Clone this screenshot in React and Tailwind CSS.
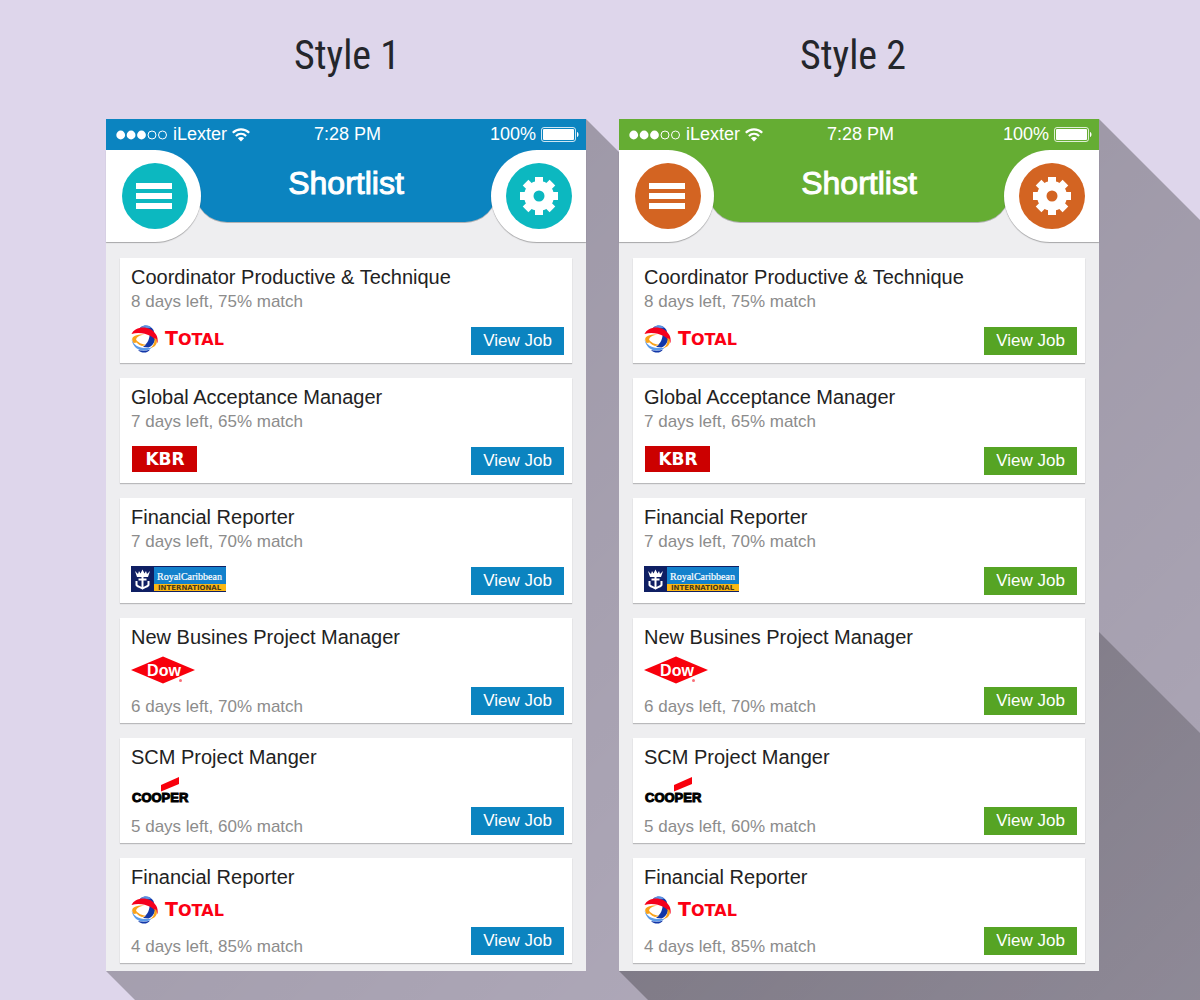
import React, { useId } from 'react';

const jobs = [
  { title: 'Coordinator Productive & Technique', days: 8, match: 75, logo: 'total', logoLast: true },
  { title: 'Global Acceptance Manager', days: 7, match: 65, logo: 'kbr', logoLast: true },
  { title: 'Financial Reporter', days: 7, match: 70, logo: 'royal', logoLast: true },
  { title: 'New Busines Project Manager', days: 6, match: 70, logo: 'dow' },
  { title: 'SCM Project Manger', days: 5, match: 60, logo: 'cooper' },
  { title: 'Financial Reporter', days: 4, match: 85, logo: 'total' },
];

const themes = {
  blue: {
    bar: 'bg-[#0b84c0]',
    half: 'bg-[linear-gradient(#0b84c0_50%,transparent_50%)]',
    round: 'bg-[#0cb8c0]',
    hole: 'fill-[#0cb8c0]',
    button: 'bg-[#0b84c0] hover:bg-[#0a76ad]',
  },
  green: {
    bar: 'bg-[#65ad33]',
    half: 'bg-[linear-gradient(#65ad33_50%,transparent_50%)]',
    round: 'bg-[#d36422]',
    hole: 'fill-[#d36422]',
    button: 'bg-[#56a424] hover:bg-[#4a9120]',
  },
};

const TotalLogo = () => (
  <svg width="100" height="28" viewBox="0 0 100 28" role="img" aria-label="Total">
    <path d="M9 2.500C13-0.500 20 0 22.500 5L24 12L16 6Z" fill="#1237a8" />
    <path d="M13 0.500C17 0 19 1 20 3L13 3.500L9 2.500Z" fill="#5b8fe0" />
    <path d="M18.500 8L24.500 11C24.500 16 22 21 17.500 22.500L12 22C17 18 19 13 18.500 8Z" fill="#1237a8" />
    <path d="M0.500 9C3 3 12 0.500 19 4C25 7.500 27.500 12 26.500 18C23 11 12 6 0.500 9Z" fill="#f5001d" />
    <path d="M2.500 18C-1.500 12 4 9 14 9.500C6.500 10.500 3.500 13.500 6 17.500Z" fill="#f9a21a" />
    <path d="M4 14C7 17.500 11 19.500 15.500 20L11 21C7.500 20 5 17.500 4 14Z" fill="#f9a21a" />
    <path d="M25.500 14C27 19 24 22 19 23.500C22 21 24 18 23.500 13Z" fill="#f9a21a" />
    <path d="M0.500 14C2 21 11 24.500 21 22.500C16 27.500 2.500 27.500 0.500 14Z" fill="#5b9bea" />
    <path d="M7 25C11 26 15 26 19 24.500C17 28 11 29 7 25Z" fill="#1237a8" />
    <text x="34" y="20" fill="#fb0014" className="font-['DejaVu_Sans'] font-bold">
      <tspan fontSize="19">T</tspan>
      <tspan fontSize="16">OTAL</tspan>
    </text>
  </svg>
);

const KbrLogo = () => (
  <svg width="68" height="26" viewBox="0 0 68 26" role="img" aria-label="KBR">
    <rect x="1" y="0" width="65" height="26" fill="#cc0000" />
    <text x="34" y="19" textAnchor="middle" fontSize="17" fill="#fff" className="font-['DejaVu_Sans'] font-bold">
      KBR
    </text>
  </svg>
);

const RoyalLogo = () => (
  <svg width="96" height="26" viewBox="0 0 96 26" role="img" aria-label="Royal Caribbean International">
    <rect width="95" height="26" fill="#0f1f63" />
    <rect x="23" y="1" width="72" height="17" fill="#1381cc" />
    <rect x="23" y="18" width="72" height="7" fill="#fcb813" />
    <g fill="none" stroke="#fff" strokeWidth="2">
      <path d="M11.500 9V22" />
      <path d="M5.500 15V19C6.500 21 9.500 21 11.500 22.500C13.500 21 16.500 21 17.500 19V15" />
      <path d="M7.500 13.500H15.500" />
    </g>
    <path d="M4 5L7 8L8 5L9.500 7.500L11.500 3.500L13.500 7.500L15 5L16 8L19 5L17 11H6Z" fill="#fff" />
    <text x="26" y="14" fontSize="10" fill="#fff" stroke="#fff" strokeWidth="0.200" className="font-['Liberation_Serif']">
      RoyalCaribbean
    </text>
    <text x="27" y="24" fontSize="7" fill="#4a3a1a" className="font-['DejaVu_Sans'] font-bold">
      INTERNATIONAL
    </text>
  </svg>
);

const DowLogo = () => (
  <svg width="66" height="28" viewBox="0 0 66 28" role="img" aria-label="Dow">
    <path d="M0 14L32 0.500L64 14L32 27.500Z" fill="#f8000c" />
    <text x="33" y="20" textAnchor="middle" fontSize="16" fill="#fff" className="font-['Liberation_Sans'] font-bold">
      Dow
    </text>
    <circle cx="49.500" cy="24.500" r="1.500" fill="#f87078" />
  </svg>
);

const CooperLogo = () => (
  <svg width="60" height="28" viewBox="0 0 60 28" role="img" aria-label="Cooper">
    <path d="M30 9L48 1V8L30 15.500Z" fill="#f8000c" />
    <text
      x="1"
      y="26"
      fontSize="13"
      stroke="#000"
      strokeWidth="1"
      className="font-['Liberation_Sans'] font-bold"
    >
      COOPER
    </text>
  </svg>
);

const logos = {
  total: TotalLogo,
  kbr: KbrLogo,
  royal: RoyalLogo,
  dow: DowLogo,
  cooper: CooperLogo,
};

const MenuIcon = () => (
  <svg width="38" height="26" viewBox="0 0 38 26" fill="#fff" aria-hidden="true">
    <rect width="36" height="6" />
    <rect y="10" width="36" height="6" />
    <rect y="20" width="36" height="6" />
  </svg>
);

const GearIcon = ({ hole }) => (
  <svg width="38" height="38" viewBox="-19 -19 38 38" fill="#fff" aria-hidden="true">
    <circle r="15" />
    {[0, 45, 90, 135].map((angle) => (
      <rect key={angle} x="-4" y="-19" width="8" height="38" transform={`rotate(${angle})`} />
    ))}
    <circle r="5.500" className={hole} />
  </svg>
);

const StatusBar = () => (
  <div className="grid h-[31px] grid-cols-3 items-center pl-[10px] pr-[7px] text-[18px] text-white">
    <div className="flex items-center gap-[5px]">
      <svg width="52" height="10" viewBox="0 0 52 10" fill="#fff" aria-hidden="true">
        <circle cx="4.700" cy="5" r="4.400" />
        <circle cx="15.100" cy="5" r="4.400" />
        <circle cx="25.500" cy="5" r="4.400" />
        <g fill="none" stroke="#fff">
          <circle cx="36" cy="5" r="4" />
          <circle cx="46.500" cy="5" r="4" />
        </g>
      </svg>
      <span>iLexter</span>
      <svg width="18" height="14" viewBox="0 0 18 14" aria-hidden="true">
        <g fill="none" stroke="#fff" strokeWidth="2.200">
          <path d="M0.800 4.800C5.500 0.200 12.500 0.200 17.200 4.800" />
          <path d="M3.900 8C6.900 5.200 11.100 5.200 14.100 8" />
        </g>
        <path d="M5.900 10.300C7.700 8.700 10.300 8.700 12.100 10.300L9 13.500Z" fill="#fff" />
      </svg>
    </div>
    <div className="text-center">7:28 PM</div>
    <div className="flex items-center justify-end gap-[5px]">
      <span>100%</span>
      <svg width="38" height="15" viewBox="0 0 38 15" aria-hidden="true">
        <rect x="0.500" y="0.500" width="34" height="14" rx="2.500" fill="none" stroke="#fff" strokeOpacity="0.800" />
        <rect x="2" y="2" width="31" height="11" rx="1" fill="#fff" />
        <path d="M36 5C38 5.500 38 9.500 36 10Z" fill="#fff" />
      </svg>
    </div>
  </div>
);

const JobCard = ({ job, theme }) => {
  const Logo = logos[job.logo];
  const meta = (
    <p className="text-[17px] leading-[22px] text-[#8c8c8c]">
      {job.days} days left, {job.match}% match
    </p>
  );

  return (
    <li className="flex h-[105px] items-end justify-between bg-white pr-2 pl-[11px] shadow-[0_1px_1px_rgba(0,0,0,0.22)]">
      <div className="flex h-full flex-col justify-between pt-[6px] pb-[5px]">
        <div>
          <h3 className="text-[20px] leading-[27px] text-[#222222]">{job.title}</h3>
          {job.logoLast ? meta : <div className="flex h-[38px] items-center"><Logo /></div>}
        </div>
        {job.logoLast ? <div className="flex h-[38px] items-center"><Logo /></div> : meta}
      </div>
      <button
        type="button"
        className={`mb-2 h-7 shrink-0 px-3 text-[17px] leading-7 text-white ${theme.button}`}
      >
        View Job
      </button>
    </li>
  );
};

// Long diagonal shadow falling to the lower right of a phone
const LongShadow = () => {
  const id = useId();
  return (
    <svg
      className="absolute inset-0 -z-10 h-full w-full overflow-visible"
      viewBox="0 0 480 852"
      preserveAspectRatio="none"
      aria-hidden="true"
    >
      <defs>
        <linearGradient id={id} gradientUnits="userSpaceOnUse" x1="0" y1="0" x2="1000" y2="1000">
          <stop offset="0" stopColor="#000" stopOpacity="0.320" />
          <stop offset="1" stopColor="#000" stopOpacity="0.180" />
        </linearGradient>
      </defs>
      <path d="M0 0H480L1480 1000V1852H1000L0 852Z" fill={`url(#${id})`} />
    </svg>
  );
};

const Phone = ({ theme }) => (
  <div className="relative w-full max-w-[480px]">
    <LongShadow />
    <div className="bg-[#eeeef0] pb-2">
      <header>
        <div className={theme.bar}>
          <StatusBar />
        </div>
        <div className={`flex h-[92px] items-start ${theme.half}`}>
          <div className="z-10 flex h-full w-[95px] items-center rounded-r-full bg-white pl-4 shadow-[0_1px_1px_rgba(0,0,0,0.3)]">
            <button
              type="button"
              aria-label="Menu"
              className={`flex size-[66px] items-center justify-center rounded-full ${theme.round}`}
            >
              <MenuIcon />
            </button>
          </div>
          <div
            className={`-mx-[6px] h-[72px] flex-1 rounded-b-[32px] pt-[15px] text-center shadow-[0_1px_0_rgba(0,0,0,0.25)] ${theme.bar}`}
          >
            <h2 className="text-[32px] leading-9 text-white [-webkit-text-stroke:1px_white]">Shortlist</h2>
          </div>
          <div className="z-10 flex h-full w-[95px] items-center justify-end rounded-l-full bg-white pr-[14px] shadow-[0_1px_1px_rgba(0,0,0,0.3)]">
            <button
              type="button"
              aria-label="Settings"
              className={`flex size-[66px] items-center justify-center rounded-full ${theme.round}`}
            >
              <GearIcon hole={theme.hole} />
            </button>
          </div>
        </div>
      </header>
      <ul className="flex flex-col gap-[15px] px-[14px] pt-4">
        {jobs.map((job, i) => (
          <JobCard key={i} job={job} theme={theme} />
        ))}
      </ul>
    </div>
  </div>
);

const App = () => {
  return (
    <main className="isolate min-h-screen overflow-hidden bg-[#ded6eb] pb-[29px] font-['Liberation_Sans',Arial,sans-serif]">
      <div className="mx-auto mb-[39px] grid max-w-[1012px] grid-cols-2 pt-8 text-center font-['Roboto_Condensed','Roboto',sans-serif] text-[40px] leading-[48px] text-[#24262b]">
        <h1>Style 1</h1>
        <h1>Style 2</h1>
      </div>
      <div className="flex justify-center gap-[33px] pl-[5px]">
        <Phone theme={themes.blue} />
        <Phone theme={themes.green} />
      </div>
    </main>
  );
};

export default App;
